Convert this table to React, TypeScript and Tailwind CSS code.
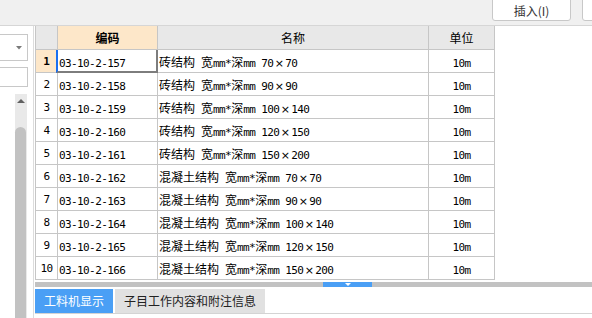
import React from "react";

const rows: [string, string][] = [
  ["03-10-2-157", "砖结构 宽mm*深mm 70×70"],
  ["03-10-2-158", "砖结构 宽mm*深mm 90×90"],
  ["03-10-2-159", "砖结构 宽mm*深mm 100×140"],
  ["03-10-2-160", "砖结构 宽mm*深mm 120×150"],
  ["03-10-2-161", "砖结构 宽mm*深mm 150×200"],
  ["03-10-2-162", "混凝土结构 宽mm*深mm 70×70"],
  ["03-10-2-163", "混凝土结构 宽mm*深mm 90×90"],
  ["03-10-2-164", "混凝土结构 宽mm*深mm 100×140"],
  ["03-10-2-165", "混凝土结构 宽mm*深mm 120×150"],
  ["03-10-2-166", "混凝土结构 宽mm*深mm 150×200"],
];

function Txt({ s }: { s: string }) {
  const parts = s.match(/[\u2E80-\u9FFF\uFF00-\uFFEF]+|×|[^\u2E80-\u9FFF\uFF00-\uFFEF×]+/g) || [];
  return (
    <span className="whitespace-pre">
      {parts.map((p, i) => {
        if (p === "×")
          return (
            <span key={i} className="inline-block w-[12px] text-center font-['DejaVu_Sans',sans-serif] text-[11px]">
              ×
            </span>
          );
        if (/[\u2E80-\u9FFF\uFF00-\uFFEF]/.test(p))
          return (
            <span key={i} className="font-['Noto_Sans_CJK_SC',sans-serif] text-[12px]">
              {p}
            </span>
          );
        return (
          <span key={i} className="font-['DejaVu_Sans_Mono',monospace] text-[11px] tracking-[-0.6px]">
            {p}
          </span>
        );
      })}
    </span>
  );
}

export default function App() {
  return (
    <div className="w-[592px] h-[318px] overflow-hidden bg-white flex flex-col text-black leading-none">
      {/* top bar */}
      <div className="h-[26px] shrink-0 bg-[#f0f0f0] border-b border-[#d6d6d6] flex justify-end items-start overflow-hidden">
        <div className="-mt-[1px] w-[79px] h-[22px] bg-white border border-[#c8c8c8] rounded-b-[3px] flex items-center justify-center pt-[1px] font-['Noto_Sans_CJK_SC',sans-serif] text-[12px] text-[#333]">
          插入(I)
        </div>
        <div className="-mt-[1px] ml-[11px] w-[40px] shrink-0 -mr-[30px] h-[22px] bg-white border border-[#c8c8c8] rounded-b-[3px]" />
      </div>

      <div className="flex flex-1 min-h-0">
        {/* left panel */}
        <div className="w-[34px] shrink-0 border-r border-[#dcdcdc] flex flex-col">
          <div className="mt-[8px] -ml-[1px] w-[29px] h-[27px] border border-[#c8c8c8] flex items-center justify-end pr-[5px]">
            <svg width="6" height="4" viewBox="0 0 6 4">
              <path d="M0 0 H6 L3 3.5 Z" fill="#7a7a7a" />
            </svg>
          </div>
          <div className="mt-[6px] -ml-[1px] w-[29px] h-[20px] border border-[#c8c8c8]" />
          <div className="mt-[7px] ml-[15px] w-[12px] flex-1 bg-[#e9e9e9] flex flex-col items-center">
            <svg className="mt-[5px]" width="8" height="4" viewBox="0 0 8 4">
              <path d="M0 4 H8 L4 0 Z" fill="#606060" />
            </svg>
            <div className="mt-[24px] w-[11px] mr-[1px] flex-1 bg-[#c2c2c2] rounded-t-[6px]" />
          </div>
        </div>

        {/* right area */}
        <div className="flex-1 flex flex-col ml-[1px] min-w-0">
          <div className="w-[460px] border-l border-[#c6c6c6] flex flex-col">
            {/* header */}
            <div className="h-[24px] flex border-b border-[#c6c6c6] font-['Noto_Sans_CJK_SC',sans-serif] text-[12px]">
              <div className="w-[22px] bg-[#e8e8e8] border-r border-[#c6c6c6]" />
              <div className="w-[100px] bg-[#fde7c9] border-r border-[#c6c6c6] flex items-center justify-center font-bold">
                编码
              </div>
              <div className="w-[271px] bg-[#e8e8e8] border-r border-[#c6c6c6] flex items-center justify-center">
                名称
              </div>
              <div className="w-[66px] bg-[#e8e8e8] border-r border-[#c6c6c6] flex items-center justify-center">
                单位
              </div>
            </div>
            {rows.map(([code, name], i) => (
              <div key={code} className="h-[23px] flex border-b border-[#c6c6c6]">
                <div
                  className={
                    i === 0
                      ? "w-[22px] bg-[#fde7c9] border-r border-[#c6c6c6] flex items-center justify-center font-['DejaVu_Sans_Mono',monospace] text-[11px] font-bold"
                      : "w-[22px] border-r border-[#c6c6c6] flex items-center justify-center font-['DejaVu_Sans_Mono',monospace] text-[11px] tracking-[-0.6px]"
                  }
                >
                  {i + 1}
                </div>
                <div className="relative w-[100px] border-r border-[#c6c6c6] flex items-center pl-[1px]">
                  <Txt s={code} />
                  {i === 0 && (
                    <div className="absolute -left-[2px] top-0 -right-[1px] -bottom-[1px] border-l-2 border-l-[#1a6ff0] border-r-2 border-r-[#7d7d7d] border-b-2 border-b-[#7d7d7d]" />
                  )}
                </div>
                <div className="w-[271px] border-r border-[#c6c6c6] flex items-center pl-[1px]">
                  <Txt s={name} />
                </div>
                <div className="w-[66px] border-r border-[#c6c6c6] flex items-center justify-center">
                  <Txt s="10m" />
                </div>
              </div>
            ))}
          </div>

          {/* splitter */}
          <div className="mt-[2px] h-[5px] bg-[#c2c2c2] flex">
            <div className="ml-[288px] w-[49px] bg-[#4a9ff5] flex justify-center items-start pt-[1px]">
              <svg width="6" height="3" viewBox="0 0 6 3">
                <path d="M0 0 H6 L3 3 Z" fill="#ffffff" />
              </svg>
            </div>
          </div>

          {/* tabs */}
          <div className="mt-[2px] h-[25px] border-b border-[#d4d4d4] flex gap-[2px] font-['Noto_Sans_CJK_SC',sans-serif] text-[12px]">
            <div className="w-[78px] bg-[#4a9ff5] text-white flex items-center justify-center">工料机显示</div>
            <div className="w-[150px] bg-[#e1e1e1] text-[#222] flex items-center justify-center">子目工作内容和附注信息</div>
          </div>
        </div>
      </div>
    </div>
  );
}
